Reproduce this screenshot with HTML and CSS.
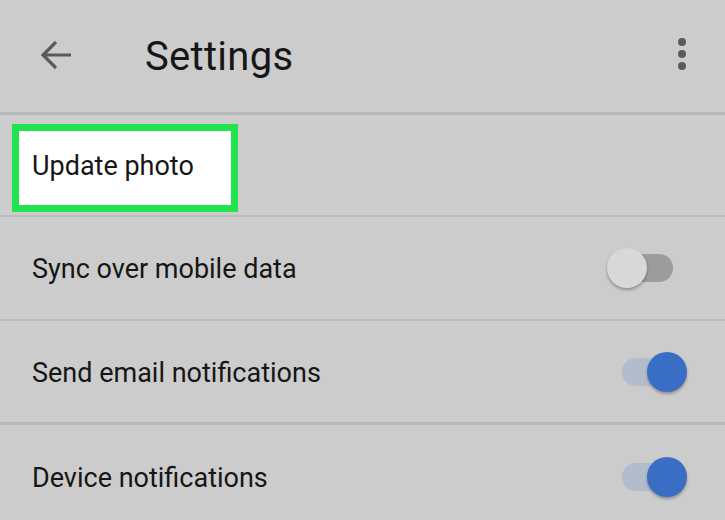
FILE: index.html
```html
<!DOCTYPE html>
<html>
<head>
<meta charset="utf-8">
<link rel="stylesheet" href="styles.css">
</head>
<body>
<div class="screen">
  <header class="topbar">
    <svg class="back" width="34" height="32" viewBox="0 0 34 32">
      <path d="M32 16H4 M17 3L4 16L17 29" fill="none" stroke="#5a5a5a" stroke-width="3.2" stroke-linecap="butt" stroke-linejoin="miter"/>
    </svg>
    <h1 class="title">Settings</h1>
    <svg class="kebab" width="10" height="34" viewBox="0 0 10 34">
      <circle cx="5" cy="5" r="4" fill="#5b5b5b"/>
      <circle cx="5" cy="17" r="4" fill="#5b5b5b"/>
      <circle cx="5" cy="29" r="4" fill="#5b5b5b"/>
    </svg>
  </header>
  <div class="row row-first">
    <div class="highlight"><span class="label">Update photo</span></div>
  </div>
  <div class="row">
    <span class="label">Sync over mobile data</span>
    <span class="toggle off"><span class="track"></span><span class="thumb"></span></span>
  </div>
  <div class="row row-thick">
    <span class="label">Send email notifications</span>
    <span class="toggle on"><span class="track"></span><span class="thumb"></span></span>
  </div>
  <div class="row row-last">
    <span class="label">Device notifications</span>
    <span class="toggle on"><span class="track"></span><span class="thumb"></span></span>
  </div>
</div>
</body>
</html>
```
FILE: styles.css
```css
html, body {
  margin: 0;
  padding: 0;
  background: #cccccc;
}
.screen {
  width: 725px;
  height: 520px;
  overflow: hidden;
  display: flex;
  flex-direction: column;
  font-family: Roboto, "Liberation Sans", sans-serif;
  color: #161616;
}
.topbar {
  flex: none;
  display: flex;
  align-items: center;
  border-bottom: 3px solid #b8b8b8;
  box-sizing: border-box;
  height: 115px;
  padding: 0 38px 4px 39px;
}
.back {
  flex: none;
  margin-top: 2px;
}
.title {
  margin: 4px 0 0 72px;
  font-weight: 400;
  font-size: 40px;
  letter-spacing: 0.3px;
  flex: 1;
}
.kebab {
  flex: none;
}
.row {
  flex: none;
  height: 104px;
  box-sizing: border-box;
  border-bottom: 2px solid #bdbdbd;
  display: flex;
  align-items: center;
  padding: 3px 37px 0 32px;
  justify-content: space-between;
}
.row-first {
  height: 102px;
  padding: 9px 0 0 12px;
  align-items: flex-start;
}
.row-thick {
  border-bottom: 3px solid #b8b8b8;
}
.row-last {
  border-bottom: none;
}
.label {
  font-size: 27px;
  line-height: 1;
}
.highlight {
  width: 226px;
  height: 88px;
  box-sizing: border-box;
  border: 7px solid #22e24d;
  background: #ffffff;
  display: flex;
  align-items: center;
  padding: 0 0 4px 13px;
}
.toggle {
  position: relative;
  width: 66px;
  height: 42px;
  flex: none;
  margin-top: -3px;
}
.track {
  position: absolute;
  top: 7px;
  height: 28px;
  border-radius: 14px;
}
.thumb {
  position: absolute;
  top: 1px;
  width: 40px;
  height: 40px;
  border-radius: 50%;
}
.off {
  margin-right: 15px;
}
.off .track {
  left: 20px;
  width: 46px;
  background: #9c9c9c;
}
.off .thumb {
  left: 0;
  background: #d8d8d8;
  box-shadow: 0 2px 3px rgba(0,0,0,0.3);
}
.on .track {
  left: 0;
  width: 46px;
  background: #b2bccd;
}
.on .thumb {
  left: 25px;
  background: #3a6ec4;
  box-shadow: 0 2px 3px rgba(0,0,0,0.3);
}
```
